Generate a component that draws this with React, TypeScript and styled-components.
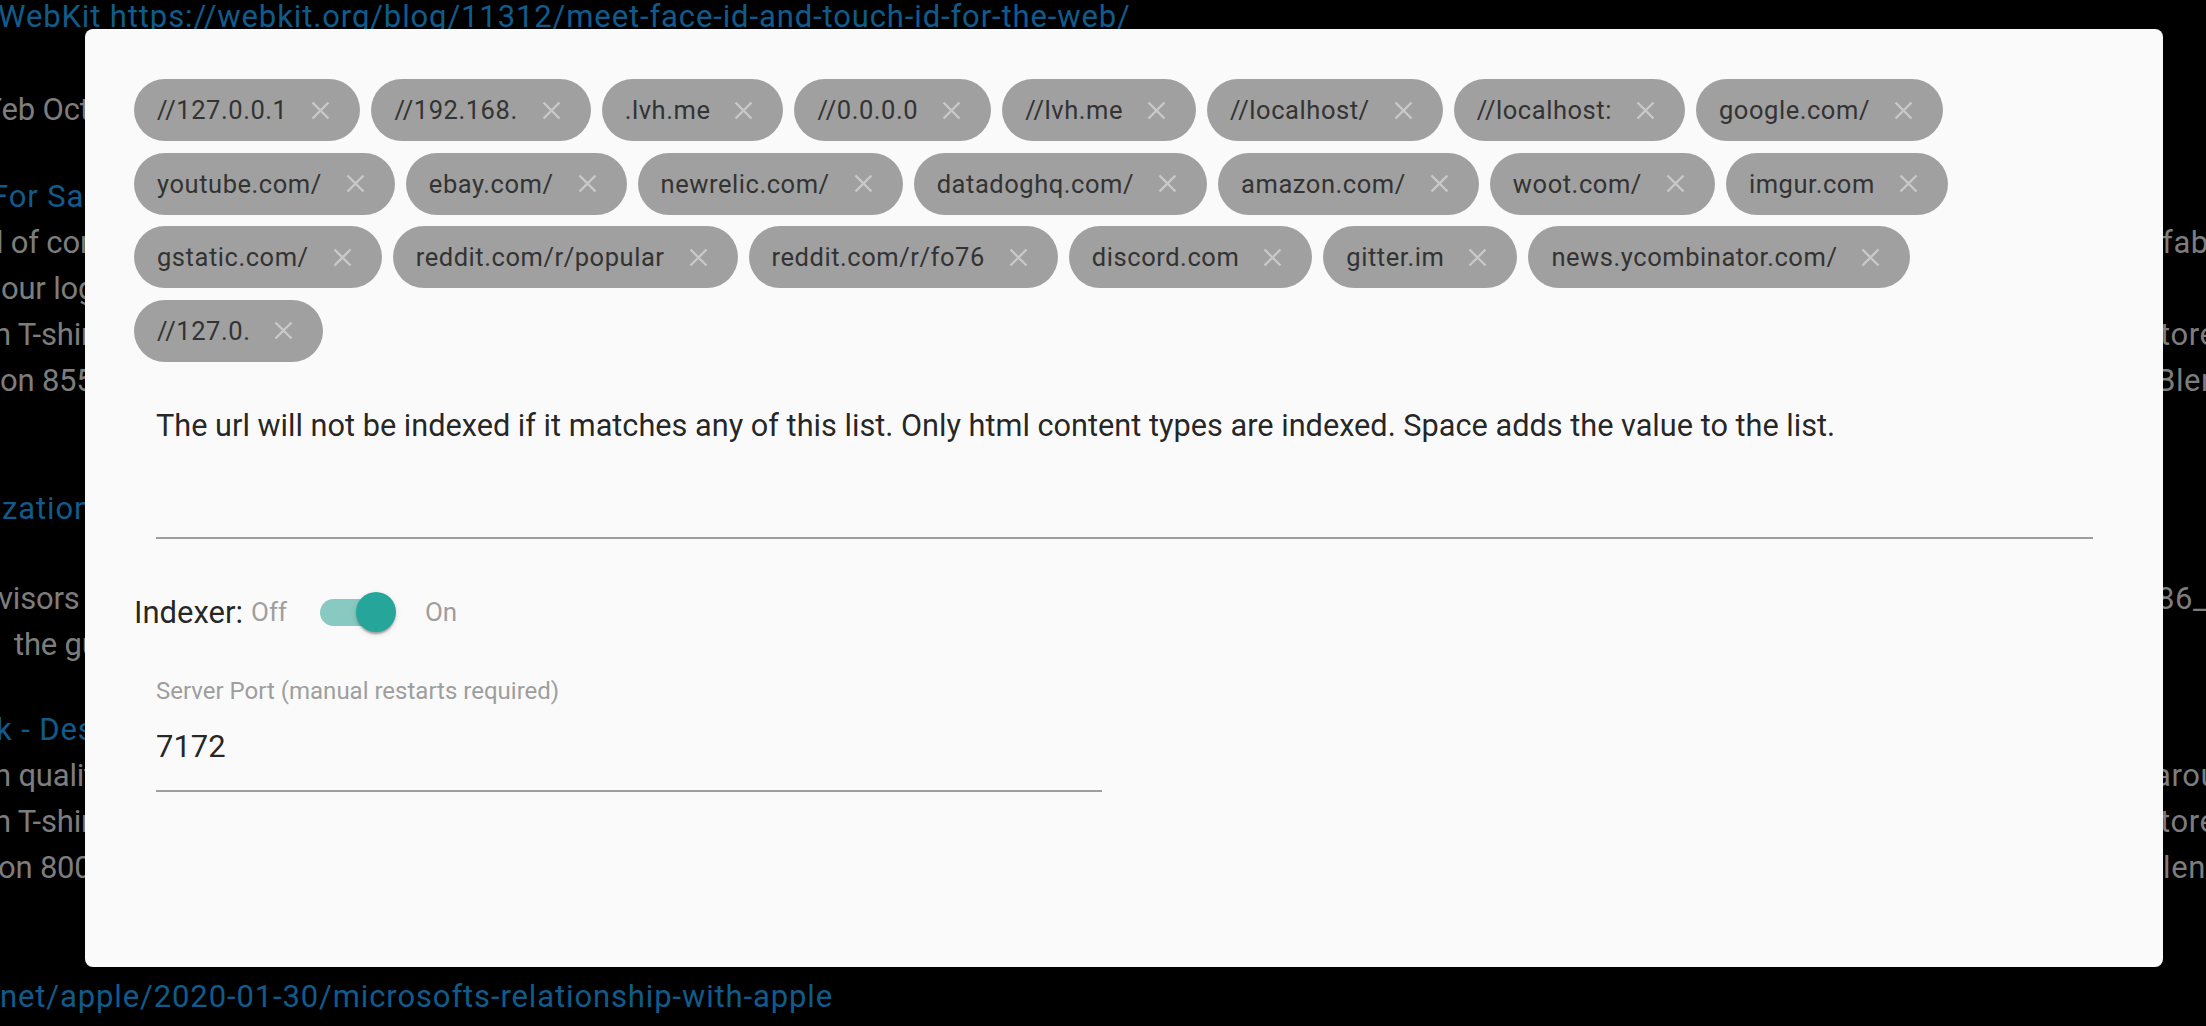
import React from "react";
import styled, { createGlobalStyle } from "styled-components";

const FONT = `Roboto, "Noto Sans", "Liberation Sans", sans-serif`;

const Global = createGlobalStyle`
  html, body {
    margin: 0;
    padding: 0;
    width: 2206px;
    height: 1026px;
    overflow: hidden;
    background: #000;
  }
  body {
    font-family: ${FONT};
  }
`;

const Page = styled.div`
  position: relative;
  width: 2206px;
  height: 1026px;
  overflow: hidden;
  background: #000;
`;

/* ---------- dimmed page behind the dialog ---------- */

const Feed = styled.div`
  display: flex;
  flex-direction: column;
  font-family: ${FONT};
  font-size: 31px;
  line-height: 46px;
`;

const FeedLine = styled.div<{ $gap: number }>`
  display: grid;
  grid-template-columns: 2163px 1fr;
  height: 46px;
  margin-top: ${(p) => p.$gap}px;
  white-space: nowrap;
`;

const FeedText = styled.span<{ $link?: boolean; $indent?: number }>`
  display: block;
  overflow: hidden;
  color: ${(p) => (p.$link ? "#115b8b" : "#7d7d7d")};
  letter-spacing: ${(p) => (p.$link ? "0.88px" : "-0.2px")};
  margin-left: ${(p) => p.$indent ?? 0}px;
`;

const FeedTail = styled.span<{ $indent?: number }>`
  display: block;
  overflow: hidden;
  color: #7d7d7d;
  letter-spacing: 0.6px;
  margin-left: ${(p) => p.$indent ?? 0}px;
`;

/* ---------- dialog ---------- */

const Dialog = styled.div`
  position: fixed;
  top: 29px;
  left: 85px;
  width: 2078px;
  height: 938px;
  box-sizing: border-box;
  padding: 50px 49px;
  background: #fafafa;
  border-radius: 8px;
  display: flex;
  flex-direction: column;
  font-family: ${FONT};
`;

const ChipList = styled.div`
  display: flex;
  flex-wrap: wrap;
  gap: 11.5px 11px;
  padding-right: 74px;
`;

const Chip = styled.div`
  display: inline-flex;
  align-items: center;
  height: 62px;
  box-sizing: border-box;
  padding: 0 30px 0 23px;
  border-radius: 31px;
  background: #a0a0a0;
  color: #333333;
  font-size: 25.5px;
  letter-spacing: 0.55px;
  white-space: nowrap;
`;

const ChipX = styled.svg`
  width: 19px;
  height: 19px;
  margin-left: 24px;
  flex: none;
`;

const Field = styled.div`
  margin: 41px 21px 0 22px;
`;

const Helper = styled.div`
  font-size: 30.7px;
  line-height: 46.5px;
  color: rgba(0, 0, 0, 0.87);
`;

const InputLine = styled.div`
  height: 88px;
  border-bottom: 2px solid #9e9e9e;
`;

const ToggleRow = styled.div`
  display: flex;
  align-items: center;
  height: 74px;
  margin-top: 36px;
`;

const RowLabel = styled.span`
  font-size: 31px;
  color: rgba(0, 0, 0, 0.87);
  margin-right: 8px;
`;

const StateLabel = styled.span`
  font-size: 26px;
  color: #9e9e9e;
`;

const Switch = styled.div`
  position: relative;
  width: 76px;
  height: 40px;
  margin: 0 29px 0 33px;
`;

const Track = styled.div`
  position: absolute;
  left: 0;
  top: 6.5px;
  width: 70px;
  height: 27px;
  border-radius: 13.5px;
  background: #88c9c2;
`;

const Thumb = styled.div`
  position: absolute;
  right: 0;
  top: 0;
  width: 40px;
  height: 40px;
  border-radius: 50%;
  background: #26a69a;
  box-shadow: 0 4px 2px -2px rgba(0, 0, 0, 0.2), 0 2px 2px 0 rgba(0, 0, 0, 0.14),
    0 2px 6px 0 rgba(0, 0, 0, 0.12);
`;

const PortField = styled.div`
  width: 946px;
  margin: 28px 0 0 22px;
  padding-bottom: 26px;
  border-bottom: 2px solid #9e9e9e;
`;

const PortLabel = styled.label`
  display: block;
  font-size: 24px;
  line-height: 28px;
  color: #9e9e9e;
`;

const PortInput = styled.input`
  display: block;
  width: 100%;
  margin-top: 23px;
  padding: 0;
  height: 36px;
  border: 0;
  outline: none;
  background: transparent;
  font-family: ${FONT};
  font-size: 31px;
  color: rgba(0, 0, 0, 0.87);
`;

const chips = [
  "//127.0.0.1",
  "//192.168.",
  ".lvh.me",
  "//0.0.0.0",
  "//lvh.me",
  "//localhost/",
  "//localhost:",
  "google.com/",
  "youtube.com/",
  "ebay.com/",
  "newrelic.com/",
  "datadoghq.com/",
  "amazon.com/",
  "woot.com/",
  "imgur.com",
  "gstatic.com/",
  "reddit.com/r/popular",
  "reddit.com/r/fo76",
  "discord.com",
  "gitter.im",
  "news.ycombinator.com/",
  "//127.0.",
];

type Line = {
  gap: number;
  text: string;
  link?: boolean;
  indent?: number;
  tail?: string;
  tailIndent?: number;
};

const feed: Line[] = [
  { gap: -6, text: "WebKit https://webkit.org/blog/11312/meet-face-id-and-touch-id-for-the-web/", link: true, indent: -2 },
  { gap: 47, text: "Feb Oct 2020", indent: -15 },
  { gap: 41, text: "For Sale", link: true, indent: -9 },
  { gap: 0, text: "l of content", indent: -4, tail: "fabric", tailIndent: -1 },
  { gap: 0, text: "our logo", indent: 1 },
  { gap: 0, text: "n T-shirts", indent: -6, tail: "tore", tailIndent: -3 },
  { gap: 0, text: "on 8555", indent: 0, tail: "Blend", tailIndent: -7 },
  { gap: 82, text: "zation", link: true, indent: 2 },
  { gap: 44, text: "visors", indent: -2, tail: "86_64", tailIndent: -6 },
  { gap: 0, text: "the guide", indent: 14 },
  { gap: 39, text: "k - Design", link: true, indent: -4 },
  { gap: 0, text: "n quality", indent: -6, tail: "around", tailIndent: -9 },
  { gap: 0, text: "n T-shirts", indent: -6, tail: "tore", tailIndent: -3 },
  { gap: 0, text: "on 8000", indent: -2, tail: "lenge", tailIndent: 0 },
  { gap: 83, text: "net/apple/2020-01-30/microsofts-relationship-with-apple", link: true, indent: 0 },
];

function CloseIcon() {
  return (
    <ChipX viewBox="0 0 19 19" aria-hidden="true">
      <path d="M1.5 1.5 L17.5 17.5 M17.5 1.5 L1.5 17.5" stroke="#c9c9c9" strokeWidth="2.4" />
    </ChipX>
  );
}

export default function App() {
  return (
    <Page>
      <Global />
      <Feed>
        {feed.map((l, i) => (
          <FeedLine key={i} $gap={l.gap}>
            <FeedText $link={l.link} $indent={l.indent}>
              {l.text}
            </FeedText>
            <FeedTail $indent={l.tailIndent}>{l.tail ?? ""}</FeedTail>
          </FeedLine>
        ))}
      </Feed>

      <Dialog role="dialog">
        <ChipList>
          {chips.map((c) => (
            <Chip key={c}>
              {c}
              <CloseIcon />
            </Chip>
          ))}
        </ChipList>

        <Field>
          <Helper>
            The url will not be indexed if it matches any of this list. Only html content types are
            indexed. Space adds the value to the list.
          </Helper>
          <InputLine />
        </Field>

        <ToggleRow>
          <RowLabel>Indexer:</RowLabel>
          <StateLabel>Off</StateLabel>
          <Switch>
            <Track />
            <Thumb />
          </Switch>
          <StateLabel>On</StateLabel>
        </ToggleRow>

        <PortField>
          <PortLabel>Server Port (manual restarts required)</PortLabel>
          <PortInput defaultValue="7172" readOnly />
        </PortField>
      </Dialog>
    </Page>
  );
}
